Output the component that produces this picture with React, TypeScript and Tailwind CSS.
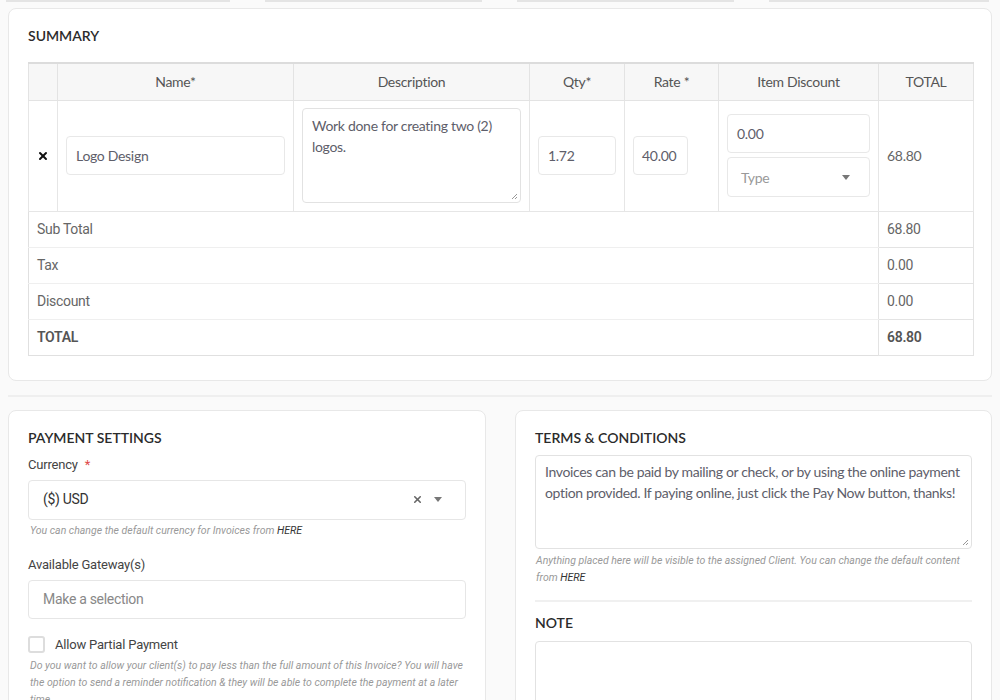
import { X } from 'lucide-react';

const lato = "font-['Lato','Liberation_Sans',sans-serif]";
const roboto = "font-['Roboto','Liberation_Sans',sans-serif]";

function Caret() {
  return (
    <svg width="8" height="5" viewBox="0 0 8 5" className="shrink-0">
      <path d="M0 0h8L4 5z" fill="#777" />
    </svg>
  );
}

function Grip() {
  return (
    <svg width="7" height="7" viewBox="0 0 7 7" className="absolute bottom-[2px] right-[2px]">
      <path d="M6 1L1 6M6 4L4 6" stroke="#999" strokeWidth="1" />
    </svg>
  );
}

const TOTALS = [
  { label: 'Sub Total', value: '68.80' },
  { label: 'Tax', value: '0.00' },
  { label: 'Discount', value: '0.00' },
];

export default function App() {
  return (
    <div className={`h-[700px] w-[1000px] overflow-hidden bg-[#fafafa] ${lato}`}>
      {/* bottoms of the cards above */}
      <div className="flex h-[2px] gap-[35px] px-[6px]">
        <div className="w-[224px] border-b-2 border-[#e4e4e4]" />
        <div className="w-[217px] border-b-2 border-[#e4e4e4]" />
        <div className="w-[217px] border-b-2 border-[#e4e4e4]" />
        <div className="w-[220px] border-b-2 border-[#e4e4e4]" />
      </div>

      <div className="mx-[8px] mt-[6px] rounded-lg border border-[#e8e8e8] bg-white px-[19px] pb-[24px] pt-[18px]">
        <h2 className="text-[14px] font-semibold leading-[18px] text-[#2b2b2b]">SUMMARY</h2>

        <table className="mt-[17px] w-[945px] table-fixed border-collapse border border-[#e0e0e0] text-[14px] tracking-[-0.3px]">
          <colgroup>
            <col className="w-[29px]" />
            <col className="w-[236px]" />
            <col className="w-[236px]" />
            <col className="w-[95px]" />
            <col className="w-[94px]" />
            <col className="w-[160px]" />
            <col className="w-[95px]" />
          </colgroup>
          <thead>
            <tr className="h-[37px] border-t-2 border-[#dcdcdc] bg-[#f7f7f7] text-[#555]">
              <th className="border border-[#e3e3e3]" />
              <th className="border border-[#e3e3e3] font-normal">Name*</th>
              <th className="border border-[#e3e3e3] font-normal">Description</th>
              <th className="border border-[#e3e3e3] font-normal">Qty*</th>
              <th className="border border-[#e3e3e3] font-normal">Rate *</th>
              <th className="border border-[#e3e3e3] font-normal">Item Discount</th>
              <th className="border border-[#e3e3e3] font-normal">TOTAL</th>
            </tr>
          </thead>
          <tbody className="text-[#666]">
            <tr className="h-[111px]">
              <td className="border border-[#e6e6e6] text-center">
                <X className="mx-auto h-[12px] w-[12px] text-[#111]" strokeWidth={4} />
              </td>
              <td className="border border-[#e6e6e6] px-[8px]">
                <div className="flex h-[39px] items-center rounded border border-[#e8e8e8] px-[9px] text-[#5e5e6a]">Logo Design</div>
              </td>
              <td className="border border-[#e6e6e6] px-[8px]">
                <div className="relative h-[95px] rounded border border-[#e2e2e2] px-[9px] pt-[6px] leading-[21px] text-[#5e5e6a]">
                  Work done for creating two (2) logos.
                  <Grip />
                </div>
              </td>
              <td className="border border-[#e6e6e6] px-[8px]">
                <div className="flex h-[39px] items-center rounded border border-[#e8e8e8] px-[9px] text-[#5e5e6a]">1.72</div>
              </td>
              <td className="border border-[#e6e6e6] px-[8px]">
                <div className="flex h-[39px] w-[55px] items-center rounded border border-[#e8e8e8] px-[8px] text-[#5e5e6a]">40.00</div>
              </td>
              <td className="border border-[#e6e6e6] px-[8px]">
                <div className="flex flex-col gap-[4px]">
                  <div className="flex h-[39px] items-center rounded border border-[#e8e8e8] px-[9px] text-[#5e5e6a]">0.00</div>
                  <div className="flex h-[40px] items-center justify-between rounded border border-[#e8e8e8] pl-[13px] pr-[19px] text-[#999]">
                    Type
                    <Caret />
                  </div>
                </div>
              </td>
              <td className="border border-[#e6e6e6] px-[8px]">68.80</td>
            </tr>
            {TOTALS.map((row) => (
              <tr key={row.label} className={`h-[36px] ${roboto}`}>
                <td colSpan={6} className="border-y border-[#efefef] px-[8px]">{row.label}</td>
                <td className="border border-[#e3e3e3] px-[8px]">{row.value}</td>
              </tr>
            ))}
            <tr className={`h-[36px] font-semibold text-[#555] ${roboto}`}>
              <td colSpan={6} className="border-t border-[#efefef] px-[8px]">TOTAL</td>
              <td className="border border-[#e3e3e3] px-[8px]">68.80</td>
            </tr>
          </tbody>
        </table>
      </div>

      <div className="mx-[8px] mt-[14px] h-[2px] bg-[#efefef]" />

      <div className="mt-[13px] flex gap-[29px] px-[8px]">
        {/* payment settings */}
        <div className={`w-[478px] rounded-lg border border-[#e8e8e8] bg-white px-[19px] pt-[18px] ${roboto}`}>
          <h2 className={`text-[14px] font-semibold leading-[18px] text-[#2b2b2b] ${lato}`}>PAYMENT SETTINGS</h2>
          <div className="mt-[9px] text-[13px] leading-[18px] tracking-[-0.2px] text-[#444]">
            Currency <span className="ml-[4px] text-[#e04a4a]">*</span>
          </div>
          <div className="mt-[6px] flex h-[40px] items-center justify-between rounded border border-[#e6e6e6] px-[14px] text-[14px] tracking-[-0.3px] text-[#333]">
            ($) USD
            <div className="flex items-center gap-[11px] pr-[9px]">
              <X className="h-[11px] w-[11px] text-[#666]" strokeWidth={3.5} />
              <Caret />
            </div>
          </div>
          <p className="mt-[4px] pl-[2px] text-[10.5px] italic leading-[14px] text-[#999]">
            You can change the default currency for Invoices from <span className="text-[#333]">HERE</span>
          </p>
          <div className="mt-[18px] text-[13px] leading-[18px] tracking-[-0.2px] text-[#444]">Available Gateway(s)</div>
          <div className="mt-[6px] flex h-[39px] items-center rounded border border-[#e6e6e6] px-[14px] text-[14px] tracking-[-0.3px] text-[#888]">
            Make a selection
          </div>
          <label className="mt-[16px] flex items-center gap-[10px] text-[13px] tracking-[-0.2px] text-[#444]">
            <span className="h-[17px] w-[17px] rounded-[3px] border-2 border-[#ddd]" />
            Allow Partial Payment
          </label>
          <p className="mt-[3px] pl-[2px] text-[10.5px] italic leading-[17px] text-[#999]">
            Do you want to allow your client(s) to pay less than the full amount of this Invoice? You will have the option to send a reminder notification &amp; they will be able to complete the payment at a later time.
          </p>
        </div>

        {/* terms & note */}
        <div className="w-[477px] rounded-lg border border-[#e8e8e8] bg-white px-[19px] pt-[18px]">
          <h2 className="text-[14px] font-semibold leading-[18px] text-[#2b2b2b]">TERMS &amp; CONDITIONS</h2>
          <div className="relative mt-[8px] h-[94px] rounded border border-[#e2e2e2] px-[9px] pt-[5px] text-[14px] leading-[21px] tracking-[-0.35px] text-[#5e5e6a]">
            Invoices can be paid by mailing or check, or by using the online payment option provided. If paying online, just click the Pay Now button, thanks!
            <Grip />
          </div>
          <p className={`mt-[3px] pl-[1px] text-[10.5px] italic leading-[17px] text-[#999] ${roboto}`}>
            Anything placed here will be visible to the assigned Client. You can change the default content from <span className="text-[#333]">HERE</span>
          </p>
          <div className="mt-[14px] h-[2px] bg-[#f0f0f0]" />
          <h2 className="mt-[12px] text-[14px] font-semibold leading-[18px] text-[#2b2b2b]">NOTE</h2>
          <div className="mt-[9px] h-[94px] rounded border border-[#e2e2e2]" />
        </div>
      </div>
    </div>
  );
}
